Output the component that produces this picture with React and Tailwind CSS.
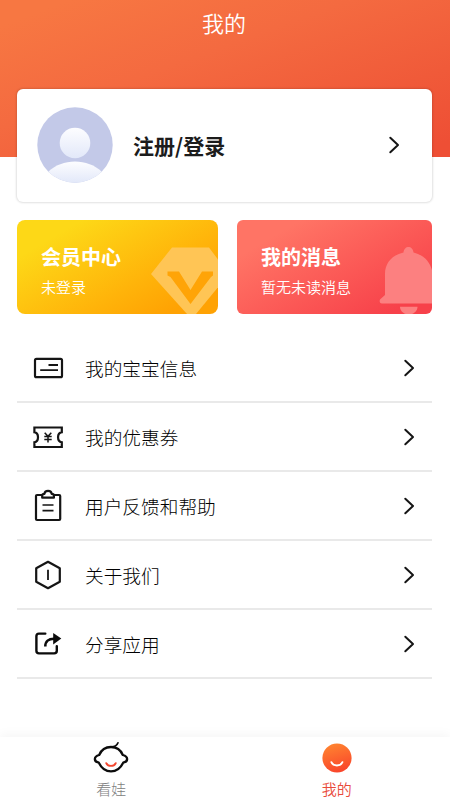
import { useState } from 'react';

const Chevron = ({ className = '' }) => (
    <svg width="12" height="20" viewBox="0 0 12 20" fill="none" className={className}>
        <path d="M2.3 2.8 L10 10 L2.3 17.2" stroke="#151515" strokeWidth="2" strokeLinecap="round" strokeLinejoin="round" />
    </svg>
);

const Avatar = () => (
    <svg width="76" height="76" viewBox="0 0 76 76" className="shrink-0">
        <defs>
            <linearGradient id="headFill" x1="0" y1="0" x2="0" y2="1">
                <stop offset="0" stopColor="#fdfdff" />
                <stop offset="1" stopColor="#e2e8f9" />
            </linearGradient>
            <clipPath id="avatarClip">
                <circle cx="38" cy="38" r="37.7" />
            </clipPath>
        </defs>
        <circle cx="38" cy="38" r="37.7" fill="#c3c9e8" />
        <g clipPath="url(#avatarClip)">
            <circle cx="38" cy="36" r="15.3" fill="url(#headFill)" />
            <path d="M11 65 C25 51 51 51 65 65 V76 H11 Z" fill="url(#headFill)" />
        </g>
    </svg>
);

const CardIcon = () => (
    <svg width="32" height="32" viewBox="0 0 32 32" fill="none" stroke="#151515">
        <rect x="3" y="6.8" width="27" height="18.4" rx="1.5" strokeWidth="2.2" />
        <path d="M16.5 13 H26 M8.2 18.2 H26" strokeWidth="1.8" />
    </svg>
);

const CouponIcon = () => (
    <svg width="32" height="32" viewBox="0 0 32 32" fill="none" stroke="#151515" strokeWidth="2.2">
        <path d="M2.4 6.5 H29.8 V11.2 C24.8 12 24.8 20.5 29.8 21.3 V26 H2.4 V21.3 C7.2 20.5 7.2 12 2.4 11.2 Z" />
        <path d="M12.7 11.7 L16 15.3 L19.3 11.7 M16 15.3 V21.5 M12.3 15.6 H19.7 M12.3 18.6 H19.7" strokeWidth="1.5" />
    </svg>
);

const ClipboardIcon = () => (
    <svg width="32" height="36" viewBox="0 0 32 36" fill="none" stroke="#151515" strokeWidth="2.2">
        <path d="M10 7 H5 Q4 7 4 8 V31 Q4 32 5 32 H27.2 Q28.2 32 28.2 31 V8 Q28.2 7 27.2 7 H22" />
        <path d="M10.2 9.7 V7.5 Q10.2 5.8 12.4 5.8 C12.8 2 19.3 2 19.7 5.8 Q21.9 5.8 21.9 7.5 V9.7 Z" strokeLinejoin="round" />
        <path d="M10.5 17 H21.5 M10.5 22.6 H21.5" strokeWidth="1.6" />
    </svg>
);

const HexagonIcon = () => (
    <svg width="32" height="32" viewBox="0 0 32 32" fill="none" stroke="#151515" strokeLinejoin="round">
        <path d="M16 2.8 L27.8 9.2 V22.8 L16 29.2 L4.2 22.8 V9.2 Z" strokeWidth="2.2" />
        <path d="M16 10.8 V21" strokeWidth="1.8" />
    </svg>
);

const ShareIcon = () => (
    <svg width="32" height="32" viewBox="0 0 32 32" fill="none" stroke="#0b0b0b">
        <path d="M13.3 5.6 H7 Q4.4 5.6 4.4 8.2 V22.8 Q4.4 25.4 7 25.4 H22.2 Q24.8 25.4 24.8 22.8 V18.3" strokeWidth="2.4" strokeLinecap="round" />
        <path d="M13.3 18.5 C13.3 13.2 16.5 10.7 22 10.7" strokeWidth="2.6" />
        <path d="M21.2 4.9 L29.3 10.6 L21.2 16.4 Z" fill="#0b0b0b" stroke="none" />
    </svg>
);

const BabyIcon = () => (
    <svg width="36" height="34" viewBox="0 0 36 34" fill="none" strokeLinecap="round" strokeLinejoin="round">
        <path d="M6.2 14 C8.5 8.5 13 6 18 6 C23 6 27.5 8.5 29.8 14 C35.5 15.4 35.5 20.7 30.2 21.7 C27.5 27.2 23.5 30.4 18 30.4 C12.5 30.4 8.5 27.2 5.8 21.7 C.5 20.7 .5 15.4 6.2 14 Z" stroke="#0c0c0c" strokeWidth="2.3" />
        <path d="M18 6 C21.5 5.9 24 4.5 25 1.8" stroke="#0c0c0c" strokeWidth="1.7" />
        <path d="M13.3 22.2 C15.3 25.8 20.7 25.8 22.7 22.2" stroke="#f4472f" strokeWidth="1.9" />
    </svg>
);

const SmileIcon = () => (
    <svg width="36" height="34" viewBox="0 0 36 34" fill="none">
        <defs>
            <linearGradient id="smileFill" x1="0.3" y1="0" x2="0.6" y2="1">
                <stop offset="0" stopColor="#ff8430" />
                <stop offset="1" stopColor="#f9442b" />
            </linearGradient>
        </defs>
        <circle cx="18" cy="17" r="14.6" fill="url(#smileFill)" />
        <path d="M12.4 21.2 C14.4 25.6 21.4 25.6 23.4 21.2" stroke="#fff" strokeWidth="1.9" strokeLinecap="round" />
    </svg>
);

const menuItems = [
    { label: '我的宝宝信息', Icon: CardIcon },
    { label: '我的优惠券', Icon: CouponIcon },
    { label: '用户反馈和帮助', Icon: ClipboardIcon },
    { label: '关于我们', Icon: HexagonIcon },
    { label: '分享应用', Icon: ShareIcon },
];

const tabs = [
    { id: 'watch', label: '看娃', Icon: BabyIcon },
    { id: 'mine', label: '我的', Icon: SmileIcon },
];

const App = () => {
    const [active, setActive] = useState('mine');

    return (
        <div className="flex h-[800px] w-[450px] flex-col overflow-hidden bg-white font-['Noto_Sans_CJK_SC',sans-serif] text-[#1c1c1c]">
            <header className="h-[157px] shrink-0 bg-[linear-gradient(160deg,#f77742_8%,#f46a40_40%,#f05a39_72%,#ee4f35_95%)]">
                <h1 className="pt-[6px] pr-[2px] text-center text-[22px] leading-[32px] font-[350] text-white">我的</h1>
            </header>

            <main className="-mt-[68px] flex flex-1 flex-col pr-[18.5px] pl-[17px]">
                <button type="button" className="flex h-[113px] shrink-0 items-center rounded-md bg-white pr-[32px] pb-[2px] pl-[19.5px] shadow-[0_0_2px_1px_rgba(0,0,0,0.12)]">
                    <Avatar />
                    <span className="ml-[20.5px] flex-1 text-left text-[21px] leading-[30px] font-bold">注册/登录</span>
                    <Chevron />
                </button>

                <div className="mt-[18px] flex shrink-0 gap-[19px]">
                    <section className="flex h-[94px] w-[201px] justify-between overflow-hidden rounded-lg bg-[linear-gradient(150deg,#fdd817_18%,#ffb40a_62%,#ffa203_86%)] pl-6 text-white">
                        <div className="pt-[22px]">
                            <h2 className="text-[20px] leading-[30px] font-bold">会员中心</h2>
                            <p className="mt-[4px] text-[15px] leading-[22px] font-[350]">未登录</p>
                        </div>
                        <svg width="67" height="94" viewBox="0 0 67 94" fill="none" className="shrink-0">
                            <path d="M21 27.5 H58 L78 54 L45 94 H36 L0 54 Z" fill="#ffc555" />
                            <path d="M16.5 51.5 H28 L39.5 70 L51 51.5 H62 V55.5 L60 57 L39.5 84 L19.5 57 L16.5 55.5 Z" fill="#ffa407" />
                        </svg>
                    </section>

                    <section className="flex h-[94px] flex-1 justify-between overflow-hidden rounded-md bg-[linear-gradient(150deg,#ff7465_18%,#fb5755_58%,#f7414a_88%)] pl-6 text-white">
                        <div className="pt-[22px]">
                            <h2 className="text-[20px] leading-[30px] font-bold">我的消息</h2>
                            <p className="mt-[4px] text-[15px] leading-[22px] font-[350]">暂无未读消息</p>
                        </div>
                        <svg width="53" height="94" viewBox="0 0 53 94" className="shrink-0">
                            <path d="M24.5 32.5 C25 25 34 25 34.5 32.5 C48 36 54 46 54 58 V77 L59 83.5 H3 C.2 83.5 .2 80 1.5 79 L6 75 V54 C6 43 13 35 24.5 32.5 Z" fill="#fc8080" />
                            <path d="M21 86.7 H38.5 C38 97 21.5 97 21 86.7 Z" fill="#fc8080" />
                        </svg>
                    </section>
                </div>

                <ul className="mt-[20px]">
                    {menuItems.map(({ label, Icon }) => (
                        <li key={label} className="flex h-[69px] items-center border-b-2 border-[#e9e9e9] pr-[17px] pl-[15px]">
                            <div className="flex w-8 items-center justify-center">
                                <Icon />
                            </div>
                            <span className="ml-[21px] flex-1 text-[18.7px] leading-[28px] font-light text-black">{label}</span>
                            <Chevron />
                        </li>
                    ))}
                </ul>
            </main>

            <nav className="flex h-[63px] shrink-0 bg-white pr-[2px] shadow-[0_-3px_10px_rgba(0,0,0,0.04)]">
                {tabs.map(({ id, label, Icon }) => (
                    <button
                        key={id}
                        type="button"
                        onClick={() => setActive(id)}
                        className={`flex flex-1 flex-col items-center pt-[4px] text-[15px] leading-[22px] ${active === id ? 'font-[350] text-[#e94a3b]' : 'pr-[3px] font-light text-[#808080]'}`}
                    >
                        <Icon />
                        <span className="mt-[3px]">{label}</span>
                    </button>
                ))}
            </nav>
        </div>
    );
};

export default App;
